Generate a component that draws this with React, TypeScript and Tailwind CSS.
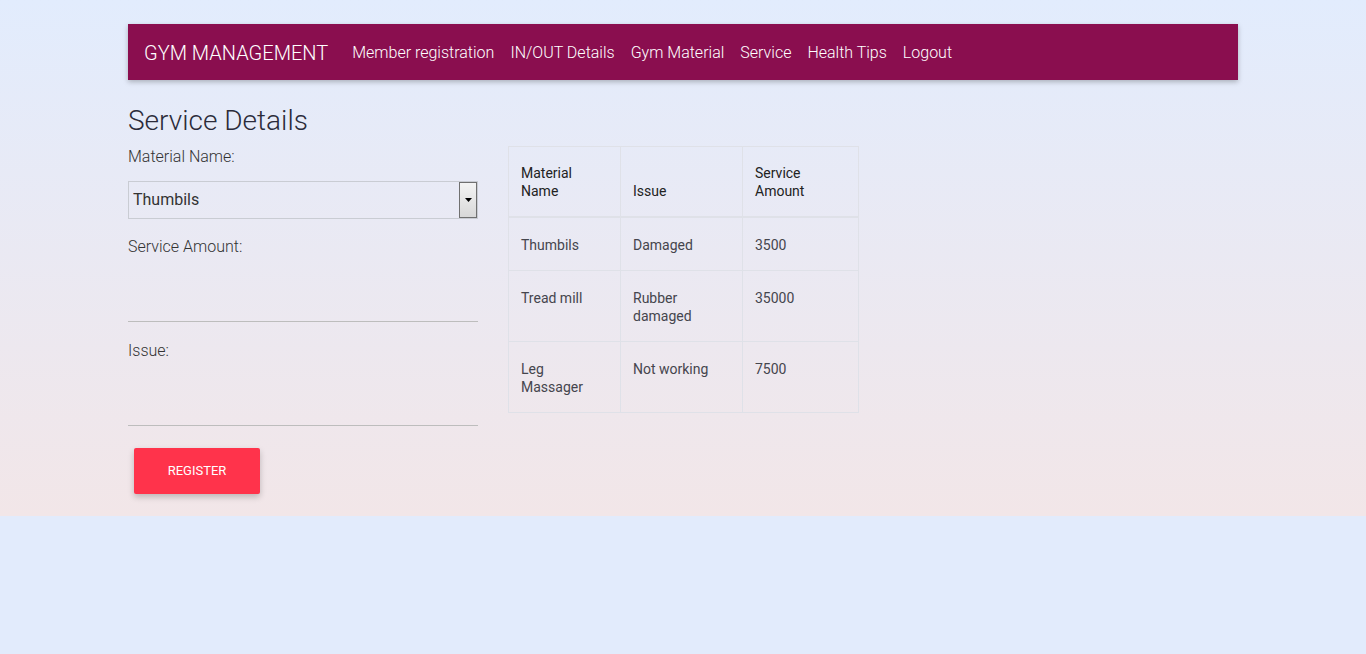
import { useState } from "react";

const links = ["Member registration", "IN/OUT Details", "Gym Material", "Service", "Health Tips", "Logout"];

const rows = [
  { name: "Thumbils", issue: "Damaged", amount: "3500" },
  { name: "Tread mill", issue: "Rubber damaged", amount: "35000" },
  { name: "Leg Massager", issue: "Not working", amount: "7500" },
];

export default function App() {
  const [material, setMaterial] = useState("Thumbils");

  return (
    <div className="min-h-[654px] bg-[#e2ebfc] font-['Roboto',sans-serif] text-[#333]">
      <div className="h-[516px] bg-gradient-to-b from-[#e2ecfd] to-[#f2e6e8] pt-6">
        <div className="mx-auto w-[1110px]">
          {/* barra de navegacao */}
          <nav className="flex h-14 items-center bg-[#8a0e4f] px-4 pt-[2px] text-white shadow-[0_2px_5px_rgba(0,0,0,0.25)]">
            <a className="mr-4 text-[20px] font-light">GYM MANAGEMENT</a>
            <ul className="flex">
              {links.map((l) => (
                <li key={l} className="px-2 text-[16px] font-light">
                  {l}
                </li>
              ))}
            </ul>
          </nav>

          <h1 className="mt-6 text-[28px] font-light leading-[34px] text-[#2b2b3a]">Service Details</h1>

          <div className="mt-[9px] flex gap-[30px]">
            {/* formulario */}
            <div className="w-[350px]">
              <label className="block text-[16px] font-light leading-5">Material Name:</label>
              <div className="relative mt-[14px] h-[38px] border border-[#c9ccd3] bg-transparent">
                <select
                  value={material}
                  onChange={(e) => setMaterial(e.target.value)}
                  className="h-full w-full appearance-none bg-transparent pl-1 text-[16px] text-[#333] outline-none"
                >
                  <option>Thumbils</option>
                  <option>Tread mill</option>
                  <option>Leg Massager</option>
                </select>
                <div className="pointer-events-none absolute right-0 top-0 flex h-[36px] w-[18px] items-center justify-center border border-[#707070] bg-gradient-to-b from-[#f4f4f4] to-[#d8d8d8]">
                  <svg width="7" height="4" viewBox="0 0 7 4">
                    <path d="M0 0h7L3.5 4z" fill="#000" />
                  </svg>
                </div>
              </div>

              <label className="mt-[18px] block text-[16px] font-light leading-5">Service Amount:</label>
              <input className="mt-[2px] h-[63px] w-full border-b border-[#bdbdbd] bg-transparent outline-none" />

              <label className="mt-[19px] block text-[16px] font-light leading-5">Issue:</label>
              <input className="mt-[2px] h-[63px] w-full border-b border-[#bdbdbd] bg-transparent outline-none" />

              <button className="ml-[6px] mt-[22px] h-[46px] w-[126px] rounded-[2px] bg-[#ff334b] text-[13px] uppercase text-white shadow-[0_3px_6px_rgba(0,0,0,0.22)]">
                Register
              </button>
            </div>

            {/* tabela */}
            <table className="mt-[-1px] h-fit w-[350px] table-fixed border-collapse border border-[#dfe1e8] text-[14px] leading-[18px] text-[#45454d]">
              <thead>
                <tr className="border-b-2 border-[#dfe1e8] align-bottom text-[#222]">
                  <th className="w-[112px] border-r border-[#dfe1e8] px-3 pb-[16px] pt-[17px] text-left font-normal">Material Name</th>
                  <th className="w-[122px] border-r border-[#dfe1e8] px-3 pb-[16px] pt-[17px] text-left font-normal">Issue</th>
                  <th className="w-[116px] px-3 pb-[16px] pt-[17px] text-left font-normal">Service Amount</th>
                </tr>
              </thead>
              <tbody>
                {rows.map((r) => (
                  <tr key={r.name} className="border-b border-[#dfe1e8] align-top">
                    <td className="border-r border-[#dfe1e8] px-3 pb-[16px] pt-[18px]">{r.name}</td>
                    <td className="border-r border-[#dfe1e8] px-3 pb-[16px] pt-[18px]">{r.issue}</td>
                    <td className="px-3 pb-[16px] pt-[18px]">{r.amount}</td>
                  </tr>
                ))}
              </tbody>
            </table>
          </div>
        </div>
      </div>
    </div>
  );
}
